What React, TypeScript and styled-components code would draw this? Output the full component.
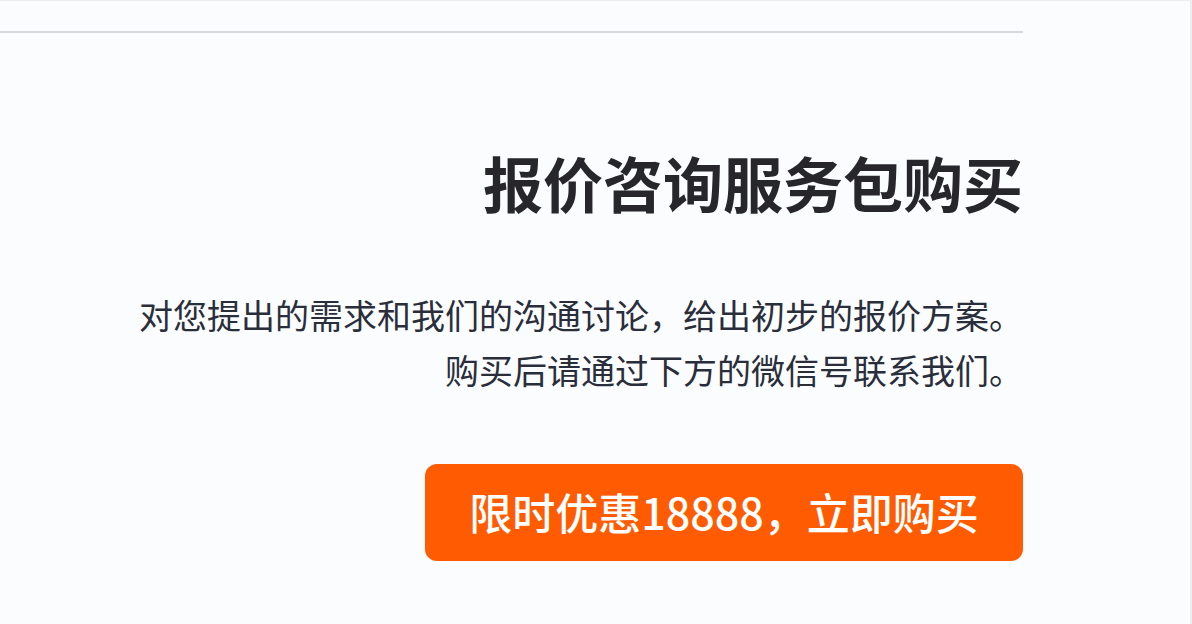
import React from "react";
import styled, { createGlobalStyle } from "styled-components";

const Global = createGlobalStyle`
  html, body { margin: 0; padding: 0; background: #fbfcfe; }
  body { font-family: "Noto Sans CJK SC", "Noto Sans", sans-serif; }
`;

const Page = styled.div`
  width: 1192px;
  height: 624px;
  box-sizing: border-box;
  border-top: 1px solid #eceef0;
  border-right: 2px solid #eceef0;
  background: #fbfcfe;
  display: flex;
  flex-direction: column;
  padding-top: 30px;
`;

const Divider = styled.hr`
  margin: 0;
  width: 1023px;
  height: 2px;
  border: none;
  background: #d6d9dd;
`;

const Content = styled.section`
  width: 1023px;
  display: flex;
  flex-direction: column;
  align-items: flex-end;
`;

const Title = styled.h1`
  margin: 113px 0 0;
  font-size: 60px;
  line-height: 72px;
  font-weight: 700;
  color: #27272b;
  letter-spacing: 0;
`;

const Desc = styled.p`
  margin: 69px 0 0;
  font-size: 34px;
  line-height: 55px;
  font-weight: 400;
  color: #2a2e3b;
  text-align: right;
`;

const BuyButton = styled.button`
  margin-top: 67px;
  width: 598px;
  height: 97px;
  border: none;
  border-radius: 12px;
  background: #ff5b02;
  color: #ffffff;
  font-family: "Noto Sans CJK SC", "Noto Sans", sans-serif;
  font-size: 43px;
  font-weight: 500;
  cursor: pointer;
  display: flex;
  align-items: center;
  justify-content: center;
  padding: 0 0 4px;
`;

export default function App() {
  return (
    <>
      <Global />
      <Page>
        <Divider />
        <Content>
          <Title>报价咨询服务包购买</Title>
          <Desc>
            对您提出的需求和我们的沟通讨论，给出初步的报价方案。
            <br />
            购买后请通过下方的微信号联系我们。
          </Desc>
          <BuyButton>限时优惠18888，立即购买</BuyButton>
        </Content>
      </Page>
    </>
  );
}
